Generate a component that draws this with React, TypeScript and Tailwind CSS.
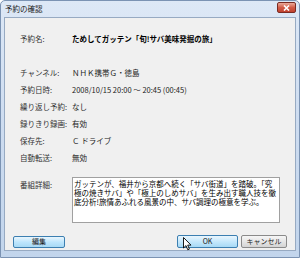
import React from 'react';

const rows = [
    { label: 'チャンネル:', value: 'ＮＨＫ携帯Ｇ・徳島' },
    { label: '予約日時:', value: '2008/10/15 20:00 ～ 20:45 (00:45)' },
    { label: '繰り返し予約:', value: 'なし' },
    { label: '録りきり録画:', value: '有効' },
    { label: '保存先:', value: 'Ｃ ドライブ' },
    { label: '自動転送:', value: '無効' },
];

const InfoRow = ({ label, value, bold }: { label: string; value: string; bold?: boolean }) => {
    return (
        <div className="flex h-[17px] items-center">
            <span className="w-[52px] shrink-0 text-[#333]">{label}</span>
            <span className={bold ? 'font-bold text-black whitespace-nowrap' : 'text-[#222] whitespace-nowrap'}>{value}</span>
        </div>
    );
}

export default function App() {
    return (
        <div
            className="relative w-[300px] h-[259px] overflow-hidden bg-white text-[7.5px] leading-[9px]"
            style={{ fontFamily: '"Noto Sans CJK JP", "Noto Sans", sans-serif' }}
        >
            {/* window frame */}
            <div className="flex flex-col w-[300px] h-[258px] border border-[#7b93b3] rounded-t-[5px] bg-gradient-to-b from-[#dde8f6] via-[#cddcf0] to-[#c2d5ec]">
                {/* title bar */}
                <div className="flex h-[16px] shrink-0 items-start justify-between pl-[4px] pr-[3px]">
                    <span className="mt-[3px] text-[7.5px] text-[#1e1e1e]">予約の確認</span>
                    <div className="mt-[1px] flex h-[11px] w-[19px] items-center justify-center rounded-[2px] border border-[#7a2a22] bg-gradient-to-b from-[#e9a99a] via-[#d25c48] to-[#c0412e]">
                        <svg width="7" height="6" viewBox="0 0 7 6">
                            <path d="M1 0.5 L6 5.5 M6 0.5 L1 5.5" stroke="#fff" strokeWidth="1.6" />
                        </svg>
                    </div>
                </div>

                {/* client area */}
                <div className="mx-[3px] mb-[6px] flex flex-1 flex-col border border-[#97aac2] bg-[#f0f0f0] px-[15px] pt-[12px]">
                    <InfoRow label="予約名:" value="ためしてガッテン「旬!サバ美味発掘の旅」" bold />
                    <div className="h-[17px]" />
                    {rows.map((r) => (
                        <InfoRow key={r.label} label={r.label} value={r.value} />
                    ))}

                    <div className="mt-[11px] flex">
                        <span className="w-[52px] shrink-0 pt-[3px] text-[#333]">番組詳細:</span>
                        <div className="h-[46px] w-[208px] shrink-0 border border-[#a0a0a0] bg-white px-[1px] pt-[2px] text-[7.5px] leading-[8.8px] text-black">
                            ガッテンが、福井から京都へ続く「サバ街道」を踏破。「究極の焼きサバ」や「極上のしめサバ」を生み出す職人技を徹底分析!旅情あふれる風景の中、サバ調理の極意を学ぶ。
                        </div>
                    </div>

                    <div className="mt-[12px] flex items-center -mx-[7px]">
                        <button className="flex h-[12px] w-[52px] items-center justify-center rounded-[2px] border border-[#3c7fb1] bg-gradient-to-b from-[#eaf6fd] via-[#bee6fd] to-[#a7d9f5] text-[7px] leading-none text-[#222]">
                            編集
                        </button>
                        <div className="flex-1" />
                        <button className="flex h-[13px] w-[61px] items-center justify-center rounded-[2px] border border-[#3c7fb1] bg-gradient-to-b from-[#eaf6fd] via-[#c5e8fc] to-[#a7d9f5] text-[7px] leading-none text-[#222]">
                            OK
                        </button>
                        <button className="ml-[3px] flex h-[13px] w-[46px] items-center justify-center rounded-[2px] border border-[#8a8a8a] bg-gradient-to-b from-[#f6f6f6] via-[#e6e6e6] to-[#d4d4d4] text-[7px] leading-none text-[#222]">
                            キャンセル
                        </button>
                    </div>
                </div>
            </div>

            {/* mouse cursor */}
            <svg className="absolute left-[183px] top-[237px]" width="9" height="14" viewBox="0 0 9 14">
                <path d="M0.5 0.5 L0.5 11 L3 8.6 L4.8 12.8 L6.4 12.1 L4.7 8.1 L8 8.1 Z" fill="#fff" stroke="#000" strokeWidth="0.9" strokeLinejoin="round" />
            </svg>
        </div>
    );
}
